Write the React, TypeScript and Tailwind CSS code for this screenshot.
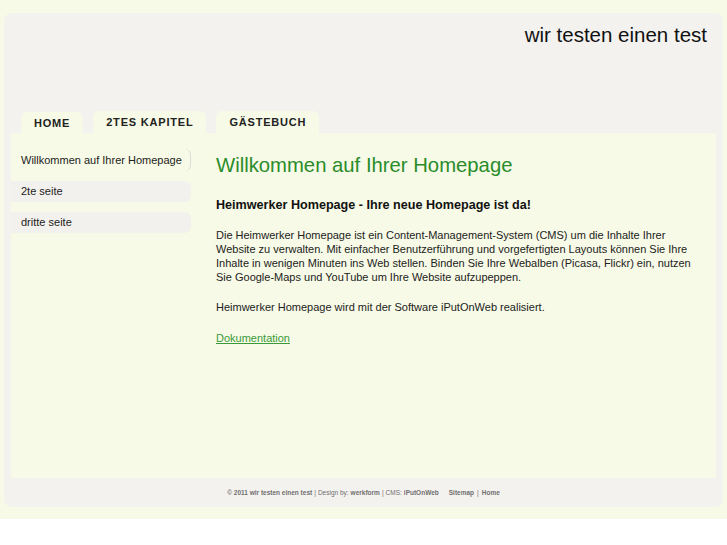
import React from "react";

export default function App() {
  const font = { fontFamily: '"Liberation Sans", Arial, sans-serif' };
  return (
    <div className="bg-white min-h-[545px]" style={font}>
      <div className="bg-[#f7fae6] pt-[13px] pb-[12px] pl-[4px] pr-[4px]">
        <div className="bg-[#f4f2ef] rounded-[8px] h-[494px] flex flex-col">
          <div className="h-[98px] flex justify-end pr-[16px] pt-[10px]">
            <div className="text-[20.5px] leading-[24px] text-[#111]">wir testen einen test</div>
          </div>
          <div className="h-[22px] flex items-end gap-[10px] pl-[17px]">
            {["HOME", "2TES KAPITEL", "GÄSTEBUCH"].map((t, i) => (
              <div
                key={t}
                className={`bg-[#f7fae6] rounded-t-[6px] px-[13px] text-[11px] font-bold tracking-[0.8px] text-[#222] flex items-center ${
                  i === 0 ? "h-[21px] pt-[1px]" : "h-[22px]"
                }`}
              >
                {t}
              </div>
            ))}
          </div>
          <div className="mx-[7px] h-[345px] bg-[#f7fae6] flex">
            <div className="w-[180px] pt-[16px] flex flex-col gap-[10px]">
              <div className="h-[22px] flex items-center pl-[10px] text-[11px] text-[#222] rounded-r-[6px] border-r border-[#dedcd6]">
                Willkommen auf Ihrer Homepage
              </div>
              <div className="h-[21px] flex items-center pl-[10px] text-[11px] text-[#222] rounded-r-[6px] bg-[#f3f1ed]">
                2te seite
              </div>
              <div className="h-[21px] flex items-center pl-[10px] text-[11px] text-[#222] rounded-r-[6px] bg-[#f3f1ed]">
                dritte seite
              </div>
            </div>
            <div className="flex-1 pl-[25px] pr-[12px] pt-[20px] text-[#222]">
              <h1 className="text-[20.3px] leading-[24px] text-[#2a8c2a]">Willkommen auf Ihrer Homepage</h1>
              <h2 className="mt-[20px] text-[12.6px] leading-[16px] font-bold text-[#111]">
                Heimwerker Homepage - Ihre neue Homepage ist da!
              </h2>
              <p className="mt-[15px] text-[11px] leading-[14px]">
                Die Heimwerker Homepage ist ein Content-Management-System (CMS) um die Inhalte Ihrer Website zu
                verwalten. Mit einfacher Benutzerführung und vorgefertigten Layouts können Sie Ihre Inhalte in wenigen
                Minuten ins Web stellen. Binden Sie Ihre Webalben (Picasa, Flickr) ein, nutzen Sie Google-Maps und
                YouTube um Ihre Website aufzupeppen.
              </p>
              <p className="mt-[16px] text-[11px] leading-[14px]">
                Heimwerker Homepage wird mit der Software iPutOnWeb realisiert.
              </p>
              <p className="mt-[17px] text-[11px] leading-[14px]">
                <a className="text-[#3a9a3a] underline">Dokumentation</a>
              </p>
            </div>
          </div>
          <div className="flex-1 flex items-center justify-center text-[6.5px] font-bold text-[#707070]">
            <span>© 2011 wir testen einen test</span>
            <span className="font-normal mx-[2px]">|</span>
            <span className="font-normal">Design by:</span>
            <span className="ml-[2px]">werkform</span>
            <span className="font-normal mx-[2px]">|</span>
            <span className="font-normal">CMS:</span>
            <span className="ml-[2px]">iPutOnWeb</span>
            <span className="ml-[10px]">Sitemap</span>
            <span className="font-normal mx-[3px]">|</span>
            <span>Home</span>
          </div>
        </div>
      </div>
    </div>
  );
}
